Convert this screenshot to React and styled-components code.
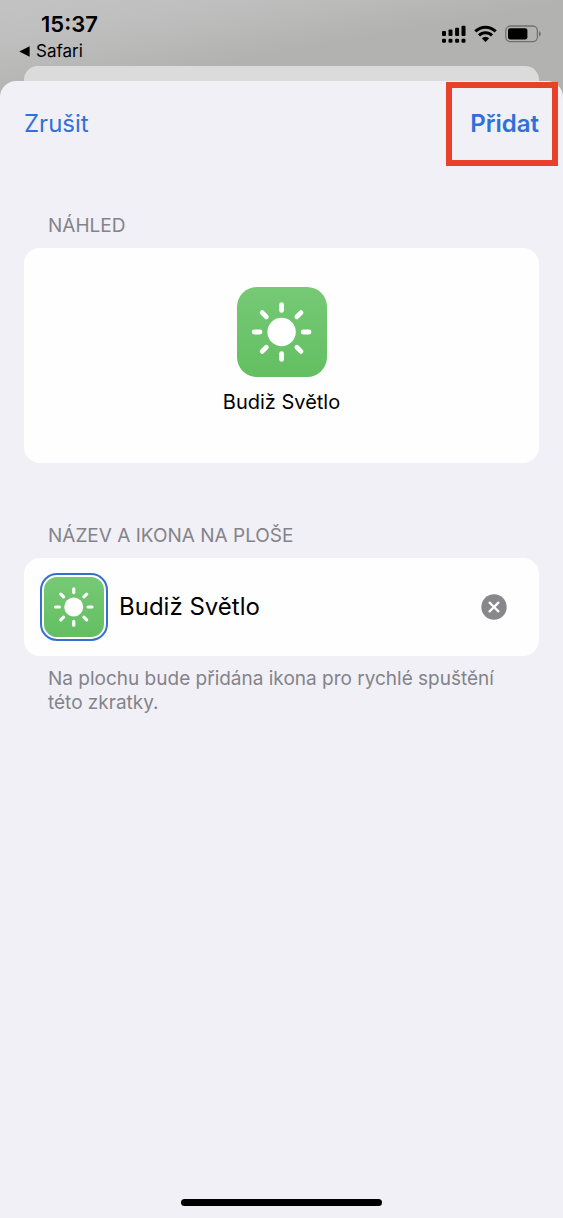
import React, { useState } from 'react';
import styled, { createGlobalStyle } from 'styled-components';

const GlobalStyle = createGlobalStyle`
  * {
    box-sizing: border-box;
  }

  body {
    margin: 0;
    color: #000;
    background: #f1f0f6;
    font-family: Inter, "Liberation Sans", sans-serif;
  }

  button, input {
    font-family: inherit;
  }
`;

const Screen = styled.div`
  display: flex;
  flex-direction: column;
  min-height: 100vh;
  background: linear-gradient(170deg, #c3c3c3 0, #bfbfbf 40px, #b2b3b1 100px);
`;

const StatusBar = styled.header`
  display: flex;
  justify-content: space-between;
  align-items: flex-start;
  height: 66px;
  padding: 12px 21px 0 19px;
`;

const Clock = styled.div`
  padding-left: 22px;
  font-size: 22px;
  font-weight: 600;
  line-height: 24px;
`;

const BackLink = styled.a`
  display: flex;
  align-items: center;
  gap: 6px;
  margin-top: 4px;
  color: #000;
  font-size: 17px;
  line-height: 22px;
  text-decoration: none;
`;

const StatusIcons = styled.div`
  display: flex;
  align-items: center;
  gap: 8px;
  padding-top: 13px;

  svg {
    display: block;
  }
`;

const BackSheet = styled.div`
  height: 15px;
  margin: 0 24px;
  border-radius: 14px 14px 0 0;
  background: #dbdbdb;
`;

const Sheet = styled.main`
  display: flex;
  flex: 1;
  flex-direction: column;
  border-radius: 16px 16px 0 0;
  background: #f1f0f6;
`;

const Toolbar = styled.div`
  display: flex;
  justify-content: space-between;
  align-items: center;
  padding: 1px 5px 0 24px;
`;

const ToolbarButton = styled.button`
  height: 84px;
  padding: ${(props) => (props.$framed ? '0 13px 2px 18px' : '0 0 2px')};
  border: ${(props) => (props.$framed ? '6px solid #e8412a' : '0')};
  background: none;
  color: #3070d8;
  font-size: 24px;
  font-weight: ${(props) => (props.$framed ? 600 : 400)};
  cursor: pointer;
`;

const Section = styled.section`
  padding: 48px 24px 13px;
`;

const Label = styled.label`
  display: block;
  padding: 0 24px 10px;
  color: #84838a;
  font-size: 19px;
  line-height: 24px;
`;

const Card = styled.div`
  border-radius: 16px;
  background: #fefefe;
`;

const Preview = styled(Card)`
  display: flex;
  flex-direction: column;
  align-items: center;
  gap: 13px;
  padding: 39px 24px 49px;
  font-size: 20px;
  line-height: 24px;
`;

const NameRow = styled(Card)`
  display: flex;
  align-items: center;
  gap: 11px;
  padding: 15px 32px 15px 16px;
`;

const IconButton = styled.button`
  flex: none;
  padding: 2px;
  border: 2px solid #3670cf;
  border-radius: 17px;
  background: #fff;
  cursor: pointer;
`;

const Tile = styled.span`
  display: block;
  width: ${(props) => props.$size}px;
  height: ${(props) => props.$size}px;
  border-radius: ${(props) => (props.$size > 60 ? 20 : 13)}px;
  background: linear-gradient(#76c975, #63bf62);

  svg {
    display: block;
    width: 100%;
    height: 100%;
  }
`;

const NameInput = styled.input`
  flex: 1;
  min-width: 0;
  padding: 0;
  border: 0;
  outline: 0;
  background: none;
  color: #000;
  font-size: 24px;
  line-height: 32px;
`;

const ClearButton = styled.button`
  flex: none;
  padding: 0;
  border: 0;
  background: none;
  cursor: pointer;

  svg {
    display: block;
  }
`;

const Note = styled.p`
  margin: 0;
  padding: 11px 16px 0 24px;
  color: #84838a;
  font-size: 19px;
  line-height: 24px;
`;

const HomeBar = styled.div`
  width: 201px;
  height: 7px;
  margin: auto auto 12px;
  border-radius: 4px;
  background: #000;
`;

const rays = [0, 45, 90, 135, 180, 225, 270, 315];

const SunTile = ({ size }) => (
  <Tile $size={size}>
    <svg viewBox="0 0 90 90" aria-hidden="true">
      <circle cx="44.6" cy="45" r="14.2" fill="#fff" />
      <g stroke="#fff" strokeWidth="4.8" strokeLinecap="round">
        {rays.map((angle) => (
          <line key={angle} x1="44.6" y1="17.6" x2="44.6" y2="23.4" transform={`rotate(${angle} 44.6 45)`} />
        ))}
      </g>
    </svg>
  </Tile>
);

const Signal = () => (
  <svg width="25" height="18" viewBox="0 0 25 18" aria-hidden="true">
    <rect x="1" y="6" width="4" height="5" rx="1" />
    <rect x="7.5" y="4.6" width="4" height="6.4" rx="1" />
    <rect x="14.1" y="2.7" width="4" height="8.3" rx="1" />
    <rect x="20.5" y="0.8" width="4" height="10.2" rx="1" />
    <rect x="1" y="13.7" width="4" height="4" rx="1.2" />
    <rect x="7.5" y="13.7" width="4" height="4" rx="1.2" />
    <rect x="14.1" y="13.7" width="4" height="4" rx="1.2" />
    <rect x="20.5" y="13.7" width="4" height="4" rx="1.2" />
  </svg>
);

const Wifi = () => (
  <svg width="23" height="18" viewBox="0 0 23 18" aria-hidden="true">
    <g fill="none" stroke="#000" strokeWidth="3">
      <path d="M1.3 6.4a14.4 14.4 0 0 1 20.4 0" />
      <path d="M5 10.4a9.2 9.2 0 0 1 13 0" />
    </g>
    <path d="M7.8 13.2a5.3 5.3 0 0 1 7.4 0L11.5 17z" />
  </svg>
);

const Battery = () => (
  <svg width="37" height="18" viewBox="0 0 37 18" aria-hidden="true">
    <rect x="0.8" y="1" width="31.6" height="15.6" rx="4.6" fill="none" stroke="#6f706f" strokeWidth="1.3" />
    <rect x="3" y="3.2" width="19.4" height="11.2" rx="2.2" />
    <path d="M34 6.2c2.4 1 2.4 4.2 0 5.2z" fill="#6f706f" />
  </svg>
);

const App = () => {
  const [name, setName] = useState('Budiž Světlo');

  return (
    <>
      <GlobalStyle />
      <Screen>
        <StatusBar>
          <div>
            <Clock>15:37</Clock>
            <BackLink href="#safari">
              <svg width="11" height="11" viewBox="0 0 11 11" aria-hidden="true">
                <path d="M0.3 5.5 10.6 0.3v10.4z" />
              </svg>
              Safari
            </BackLink>
          </div>
          <StatusIcons>
            <Signal />
            <Wifi />
            <Battery />
          </StatusIcons>
        </StatusBar>
        <BackSheet />
        <Sheet>
          <Toolbar>
            <ToolbarButton type="button">Zrušit</ToolbarButton>
            <ToolbarButton type="button" $framed>Přidat</ToolbarButton>
          </Toolbar>

          <Section>
            <Label as="div">NÁHLED</Label>
            <Preview>
              <SunTile size={90} />
              <span>{name}</span>
            </Preview>
          </Section>

          <Section>
            <Label htmlFor="name">NÁZEV A IKONA NA PLOŠE</Label>
            <NameRow>
              <IconButton type="button" aria-label="Ikona">
                <SunTile size={60} />
              </IconButton>
              <NameInput id="name" value={name} onChange={(e) => setName(e.target.value)} />
              <ClearButton type="button" aria-label="Vymazat" onClick={() => setName('')}>
                <svg width="26" height="26" viewBox="0 0 26 26" aria-hidden="true">
                  <circle cx="13" cy="13" r="12.7" fill="#88888c" />
                  <path d="M8.6 8.6l8.8 8.8M17.4 8.6l-8.8 8.8" stroke="#fff" strokeWidth="2.2" strokeLinecap="round" />
                </svg>
              </ClearButton>
            </NameRow>
            <Note>Na plochu bude přidána ikona pro rychlé spuštění této zkratky.</Note>
          </Section>
          <HomeBar />
        </Sheet>
      </Screen>
    </>
  );
};

export default App;
